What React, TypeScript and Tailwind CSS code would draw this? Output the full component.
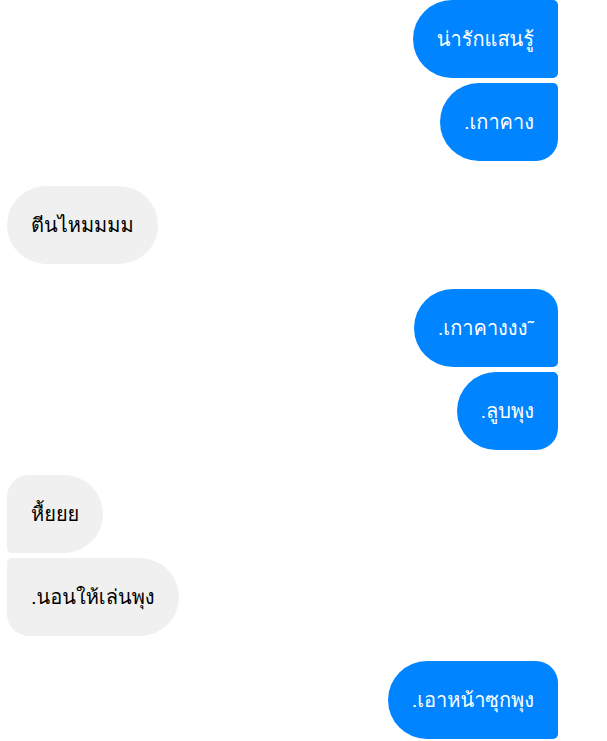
const msgs: { text: string; me: boolean; cls: string; gap: string }[] = [
  { text: "น่ารักแสนรู้", me: true, cls: "rounded-l-[39px] rounded-tr-[5px] rounded-br-[5px]", gap: "" },
  { text: ".เกาคาง", me: true, cls: "rounded-l-[39px] rounded-tr-[5px] rounded-br-[22px]", gap: "mt-[5px]" },
  { text: "ตีนไหมมมม", me: false, cls: "rounded-[39px]", gap: "mt-[25px]" },
  { text: ".เกาคางงง˜", me: true, cls: "rounded-l-[39px] rounded-tr-[22px] rounded-br-[5px]", gap: "mt-[25px]" },
  { text: ".ลูบพุง", me: true, cls: "rounded-l-[39px] rounded-tr-[5px] rounded-br-[22px]", gap: "mt-[5px]" },
  { text: "หื้ยยย", me: false, cls: "rounded-r-[39px] rounded-tl-[22px] rounded-bl-[5px]", gap: "mt-[25px]" },
  { text: ".นอนให้เล่นพุง", me: false, cls: "rounded-r-[39px] rounded-tl-[5px] rounded-bl-[22px]", gap: "mt-[5px]" },
  { text: ".เอาหน้าซุกพุง", me: true, cls: "rounded-l-[39px] rounded-tr-[22px] rounded-br-[5px]", gap: "mt-[25px]" },
];

export default function App() {
  return (
    <div className="w-[607px] h-[741px] overflow-hidden bg-white pl-[7px] pr-[49px] font-['Loma','Tahoma','Noto_Sans_Thai','Noto_Sans',sans-serif]">
      <div className="flex flex-col">
        {msgs.map((m, i) => (
          <div key={i} className={`flex ${m.me ? "justify-end" : "justify-start"} ${m.gap}`}>
            <div
              className={`h-[78px] flex items-center px-6 text-[20px] whitespace-nowrap ${m.cls} ${
                m.me ? "bg-[#0084ff] text-white" : "bg-[#f0f0f0] text-black"
              }`}
            >
              {m.text}
            </div>
          </div>
        ))}
      </div>
    </div>
  );
}
